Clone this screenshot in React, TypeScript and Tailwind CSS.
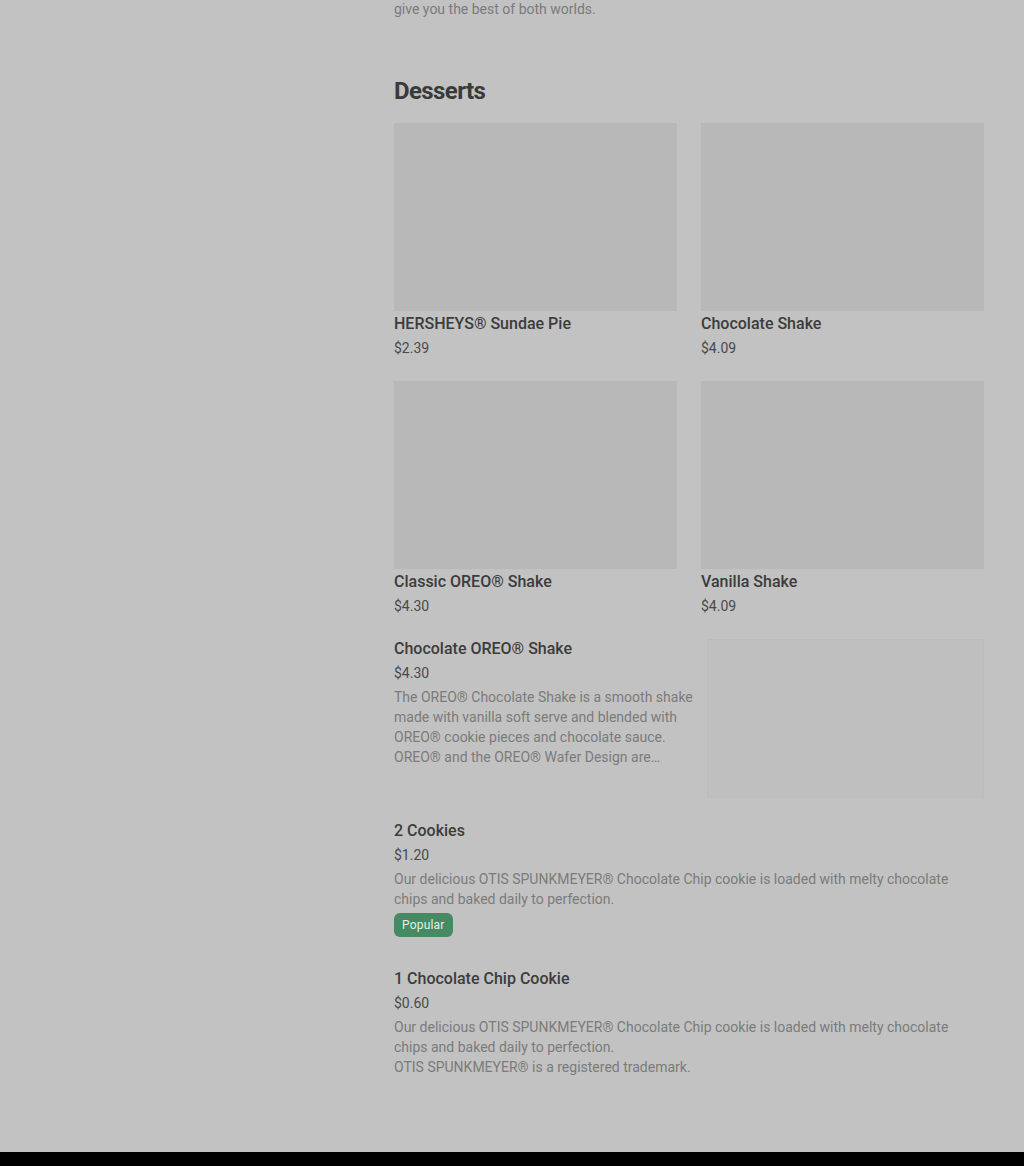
import React from 'react';

const GRID_ITEMS = [
  { name: 'HERSHEYS® Sundae Pie', price: '$2.39' },
  { name: 'Chocolate Shake', price: '$4.09' },
  { name: 'Classic OREO® Shake', price: '$4.30' },
  { name: 'Vanilla Shake', price: '$4.09' },
];

const COOKIE_DESC =
  'Our delicious OTIS SPUNKMEYER® Chocolate Chip cookie is loaded with melty chocolate chips and baked daily to perfection.';

const App: React.FC = () => {
  return (
    <div
      className="min-h-[1166px] w-full bg-[#c2c2c2] flex flex-col"
      style={{ fontFamily: 'Roboto, "Noto Sans", Arial, sans-serif' }}
    >
      <div className="flex flex-1">
        <aside className="w-[394px] shrink-0"></aside>
        <main className="w-[590px] flex flex-col">
          <p className="text-[14px] leading-[18px] text-[#7a7a7a]">
            give you the best of both worlds.
          </p>

          <h2 className="mt-[60px] text-[24px] leading-[26px] font-bold text-[#3a3a3a] tracking-tight">
            Desserts
          </h2>

          <div className="mt-[19px] grid grid-cols-2 gap-x-6 gap-y-[23px]">
            {GRID_ITEMS.map((item, idx) => (
              <div key={idx} className="flex flex-col">
                <div className="h-[188px] bg-[#b8b8b8]"></div>
                <div className="mt-[1px] text-[16px] leading-[24px] font-medium text-[#3c3c3c]">
                  {item.name}
                </div>
                <div className="mt-[2px] text-[14px] leading-[20px] text-[#4a4a4a]">{item.price}</div>
              </div>
            ))}
          </div>

          <div className="mt-[21px] flex gap-3">
            <div className="flex-1 flex flex-col">
              <div className="text-[16px] leading-[24px] font-medium text-[#3c3c3c]">
                Chocolate OREO® Shake
              </div>
              <div className="mt-[2px] text-[14px] leading-[20px] text-[#4a4a4a]">$4.30</div>
              <p className="mt-[4px] text-[14px] leading-[20px] text-[#7b7b7b] line-clamp-4">
                The OREO® Chocolate Shake is a smooth shake made with vanilla soft serve and blended with
                OREO® cookie pieces and chocolate sauce. OREO® and the OREO® Wafer Design are trademarks of
                Mondelez International group, used under license.
              </p>
            </div>
            <div className="w-[277px] h-[159px] mt-[2px] shrink-0 bg-[#bfbfbf] border border-[#bcbcbc]"></div>
          </div>

          <div className="mt-[21px] flex flex-col">
            <div className="text-[16px] leading-[24px] font-medium text-[#3c3c3c]">2 Cookies</div>
            <div className="mt-[2px] text-[14px] leading-[20px] text-[#4a4a4a]">$1.20</div>
            <p className="mt-[4px] text-[14px] leading-[20px] text-[#7b7b7b] pr-[20px]">{COOKIE_DESC}</p>
            <div className="mt-[3px]">
              <span className="inline-flex items-center h-[24px] px-[8px] rounded-md bg-[#458a63] text-[12px] tracking-[0.2px] text-[#e6eee9]">
                Popular
              </span>
            </div>
          </div>

          <div className="mt-[30px] flex flex-col">
            <div className="text-[16px] leading-[24px] font-medium text-[#3c3c3c]">
              1 Chocolate Chip Cookie
            </div>
            <div className="mt-[2px] text-[14px] leading-[20px] text-[#4a4a4a]">$0.60</div>
            <p className="mt-[4px] text-[14px] leading-[20px] text-[#7b7b7b] pr-[20px]">
              {COOKIE_DESC}
              <br />
              OTIS SPUNKMEYER® is a registered trademark.
            </p>
          </div>
        </main>
      </div>
      <div className="h-[14px] bg-black"></div>
    </div>
  );
};

export default App;
